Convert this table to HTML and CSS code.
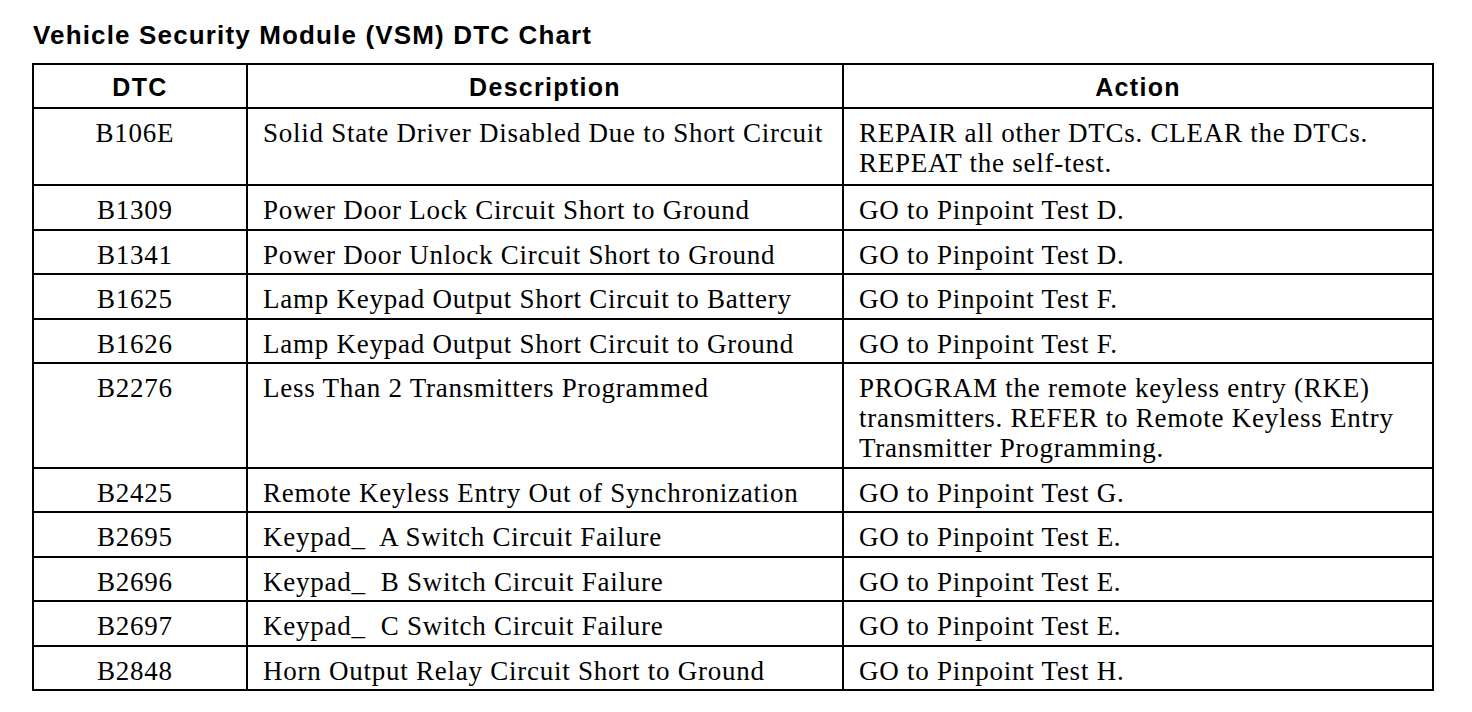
FILE: index.html
```html
<!DOCTYPE html>
<html>
<head>
<meta charset="utf-8">
<link rel="stylesheet" href="styles.css">
</head>
<body>
<div class="page">
  <h1 class="title">Vehicle Security Module (VSM) DTC Chart</h1>
  <table class="chart">
    <colgroup>
      <col class="c-dtc">
      <col class="c-desc">
      <col class="c-act">
    </colgroup>
    <thead>
      <tr><th>DTC</th><th>Description</th><th>Action</th></tr>
    </thead>
    <tbody>
      <tr class="tall"><td class="code">B106E</td><td>Solid State Driver Disabled Due to Short Circuit</td><td>REPAIR all other DTCs. CLEAR the DTCs.<br>REPEAT the self-test.</td></tr>
      <tr><td class="code">B1309</td><td>Power Door Lock Circuit Short to Ground</td><td>GO to Pinpoint Test D.</td></tr>
      <tr><td class="code">B1341</td><td>Power Door Unlock Circuit Short to Ground</td><td>GO to Pinpoint Test D.</td></tr>
      <tr><td class="code">B1625</td><td>Lamp Keypad Output Short Circuit to Battery</td><td>GO to Pinpoint Test F.</td></tr>
      <tr><td class="code">B1626</td><td>Lamp Keypad Output Short Circuit to Ground</td><td>GO to Pinpoint Test F.</td></tr>
      <tr><td class="code">B2276</td><td>Less Than 2 Transmitters Programmed</td><td>PROGRAM the remote keyless entry (RKE)<br>transmitters. REFER to Remote Keyless Entry<br>Transmitter Programming.</td></tr>
      <tr><td class="code">B2425</td><td>Remote Keyless Entry Out of Synchronization</td><td>GO to Pinpoint Test G.</td></tr>
      <tr><td class="code">B2695</td><td>Keypad_&nbsp; A Switch Circuit Failure</td><td>GO to Pinpoint Test E.</td></tr>
      <tr><td class="code">B2696</td><td>Keypad_&nbsp; B Switch Circuit Failure</td><td>GO to Pinpoint Test E.</td></tr>
      <tr><td class="code">B2697</td><td>Keypad_&nbsp; C Switch Circuit Failure</td><td>GO to Pinpoint Test E.</td></tr>
      <tr><td class="code">B2848</td><td>Horn Output Relay Circuit Short to Ground</td><td>GO to Pinpoint Test H.</td></tr>
    </tbody>
  </table>
</div>
</body>
</html>
```
FILE: styles.css
```css
html, body {
  margin: 0;
  padding: 0;
  background: #fff;
  color: #000;
}
.page {
  padding: 18px 0 0 32px;
}
.title {
  margin: 0 0 11px 1px;
  font-family: "Liberation Sans", Arial, sans-serif;
  font-weight: bold;
  font-size: 26px;
  line-height: 34px;
  letter-spacing: 1.15px;
}
.chart {
  border-collapse: collapse;
  width: 1400px;
  table-layout: fixed;
  font-family: "Liberation Serif", "Times New Roman", serif;
  font-size: 27px;
  letter-spacing: 0.75px;
}
.c-dtc { width: 214px; }
.c-desc { width: 596px; }
.c-act { width: 590px; }
.chart th, .chart td {
  border: 2px solid #000;
}
.chart th {
  font-family: "Liberation Sans", Arial, sans-serif;
  font-weight: bold;
  font-size: 25px;
  letter-spacing: 1.3px;
  line-height: 30px;
  padding: 7px 0 5px 0;
  text-align: center;
}
.chart td {
  line-height: 30px;
  padding: 9px 15px 3.5px 15px;
  vertical-align: top;
  text-align: left;
  white-space: nowrap;
}
.chart td.code {
  text-align: center;
  padding-left: 0;
  padding-right: 10px;
}
.chart tr.tall td {
  padding-bottom: 6px;
}
```
